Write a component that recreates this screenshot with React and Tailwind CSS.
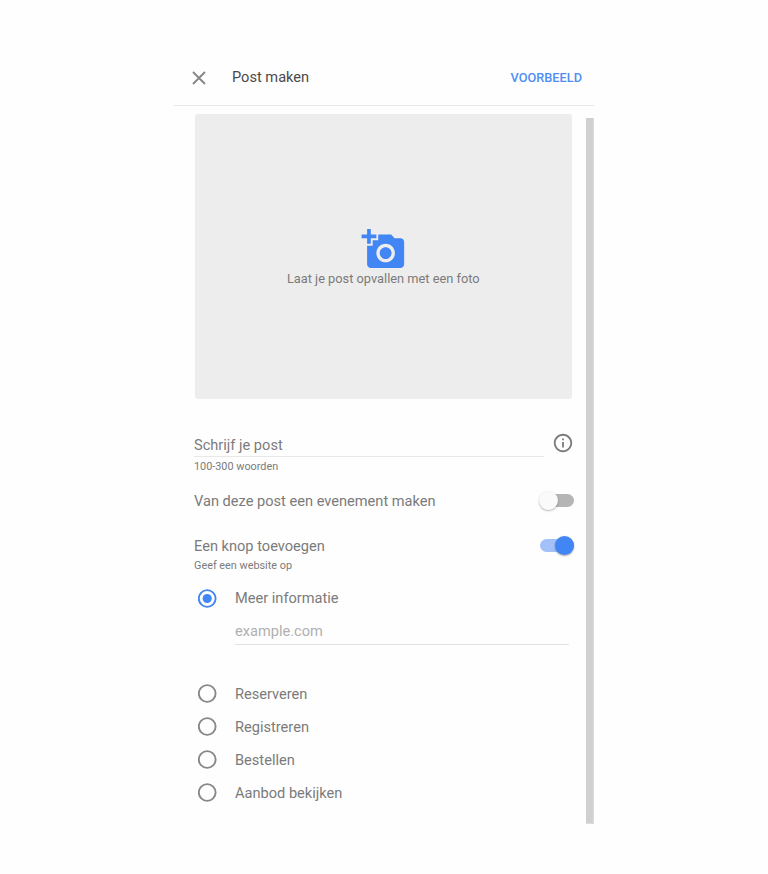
import { useState } from "react";
import clsx from "clsx";

const OPTIONS = ["Reserveren", "Registreren", "Bestellen", "Aanbod bekijken"];

const CloseIcon = () => (
    <svg className="block w-[14px] h-[14px]" viewBox="0 0 14 14" fill="none" stroke="#858585" strokeWidth="1.8">
        <path d="M1 1l12 12M13 1L1 13" />
    </svg>
);

const AddPhotoIcon = () => (
    <svg className="block w-[45px] h-[45px]" viewBox="0 0 24.3 24.3" fill="#4285f4">
        <path transform="translate(.3 .1)" d="M3 4V1h2v3h3v2H5v3H3V6H0V4h3zm3 6V7h3V4h7l1.83 2H21c1.1 0 2 .9 2 2v12c0 1.1-.9 2-2 2H5c-1.1 0-2-.9-2-2V10h3zm7 9c2.76 0 5-2.24 5-5s-2.24-5-5-5-5 2.24-5 5 2.24 5 5 5zm-3.2-5c0 1.77 1.43 3.2 3.2 3.2s3.2-1.43 3.2-3.2-1.43-3.2-3.2-3.2-3.2 1.43-3.2 3.2z" />
    </svg>
);

const InfoIcon = () => (
    <svg className="block w-[22px] h-[22px]" viewBox="0 0 24 24" fill="#7b7b7b">
        <path d="M11 17h2v-6h-2v6zm1-15C6.48 2 2 6.48 2 12s4.48 10 10 10 10-4.48 10-10S17.52 2 12 2zm0 18c-4.41 0-8-3.59-8-8s3.59-8 8-8 8 3.59 8 8-3.59 8-8 8zM11 9h2V7h-2v2z" />
    </svg>
);

const Toggle = ({ checked, onChange }) => (
    <button
        type="button"
        role="switch"
        aria-checked={checked}
        onClick={() => onChange(!checked)}
        className={clsx(
            "w-[34px] h-[13px] mb-[1.5px] mr-[0.5px] rounded-full flex items-center cursor-pointer",
            checked ? "bg-[#a3c1f9] justify-end" : "bg-[#b5b5b5] justify-start"
        )}
    >
        <span
            className={clsx(
                "w-[18.5px] h-[18.5px] rounded-full shrink-0",
                checked
                    ? "bg-[#4285f4] shadow-[0_1px_2px_rgba(0,0,0,0.35)]"
                    : "-ml-[0.5px] bg-[#fafafa] shadow-[0_1px_2px_rgba(0,0,0,0.3)]"
            )}
        />
    </button>
);

const Radio = ({ label, checked, onSelect }) => (
    <button type="button" role="radio" aria-checked={checked} onClick={onSelect} className="h-[33px] pl-[3.5px] flex items-center cursor-pointer">
        <svg className="block w-[19px] h-[19px]" viewBox="0 0 19 19" fill="none">
            <circle cx="9.2" cy="9.5" r="8.4" strokeWidth="1.9" stroke={checked ? "#4285f4" : "#888888"} />
            {checked && <circle cx="9.2" cy="9.5" r="4.6" fill="#4285f4" />}
        </svg>
        <span className="ml-[18.5px] text-[14.6px] leading-5">{label}</span>
    </button>
);

export default function App() {
    const [isEvent, setIsEvent] = useState(false);
    const [hasButton, setHasButton] = useState(true);
    const [action, setAction] = useState("Meer informatie");

    return (
        <div className="w-[768px] h-[874px] bg-[#fefefe] pt-[50px] pl-[174px] font-['Roboto',sans-serif] text-[#7b7b7b] overflow-hidden">
            <div className="w-[420px]">
                {/* Header */}
                <header className="h-14 flex items-center border-b border-[#e8e8e8] pl-[18px] pr-3">
                    <button type="button" aria-label="Sluiten" className="cursor-pointer">
                        <CloseIcon />
                    </button>
                    <h1 className="ml-[26px] mb-px text-[14.6px] leading-5 text-[#4a4a4a]">Post maken</h1>
                    <button type="button" className="ml-auto text-[12.75px] leading-5 font-medium text-[#4f8ef5] cursor-pointer">
                        VOORBEELD
                    </button>
                </header>

                <div className="flex justify-between">
                    <main className="w-[380px] ml-5 pt-2 flex flex-col">
                        {/* Photo */}
                        <div className="w-[377.5px] h-[285px] ml-[0.5px] rounded-[3px] bg-[#ededed] flex flex-col items-center pt-[113px]">
                            <AddPhotoIcon />
                            <p className="-mt-px text-[12.8px] leading-4">Laat je post opvallen met een foto</p>
                        </div>

                        {/* Post text */}
                        <div className="mt-[33px] flex">
                            <div className="w-[350px]">
                                <div className="h-[25px] pt-[3px] border-b border-[#e8e8e8] text-[14.6px] leading-5">Schrijf je post</div>
                                <p className="mt-[2px] text-[10.85px] leading-4">100-300 woorden</p>
                            </div>
                            <span className="ml-[8.5px]">
                                <InfoIcon />
                            </span>
                        </div>

                        <div className="mt-4 h-5 flex items-center justify-between">
                            <span className="text-[14.6px] leading-5">Van deze post een evenement maken</span>
                            <Toggle checked={isEvent} onChange={setIsEvent} />
                        </div>

                        <div className="mt-[25px] h-5 flex items-center justify-between">
                            <span className="text-[14.6px] leading-5">Een knop toevoegen</span>
                            <Toggle checked={hasButton} onChange={setHasButton} />
                        </div>
                        <p className="mt-[2px] text-[10.85px] leading-4">Geef een website op</p>

                        {/* Button type */}
                        <div role="radiogroup" className="mt-[7.5px] flex flex-col items-start">
                            <Radio
                                label="Meer informatie"
                                checked={action === "Meer informatie"}
                                onSelect={() => setAction("Meer informatie")}
                            />
                            <div className="ml-[41px] w-[334px] h-[30px] pt-[6.5px] mb-[32.5px] border-b border-[#e2e2e2] text-[14.6px] leading-5 text-[#b0b0b0]">
                                example.com
                            </div>
                            {OPTIONS.map((option) => (
                                <Radio
                                    key={option}
                                    label={option}
                                    checked={action === option}
                                    onSelect={() => setAction(option)}
                                />
                            ))}
                        </div>
                    </main>

                    {/* Scrollbar */}
                    <div className="w-2 h-[706px] mt-3 bg-[#d0d0d0] border-r border-b border-[#dcdcdc]" />
                </div>
            </div>
        </div>
    );
}
